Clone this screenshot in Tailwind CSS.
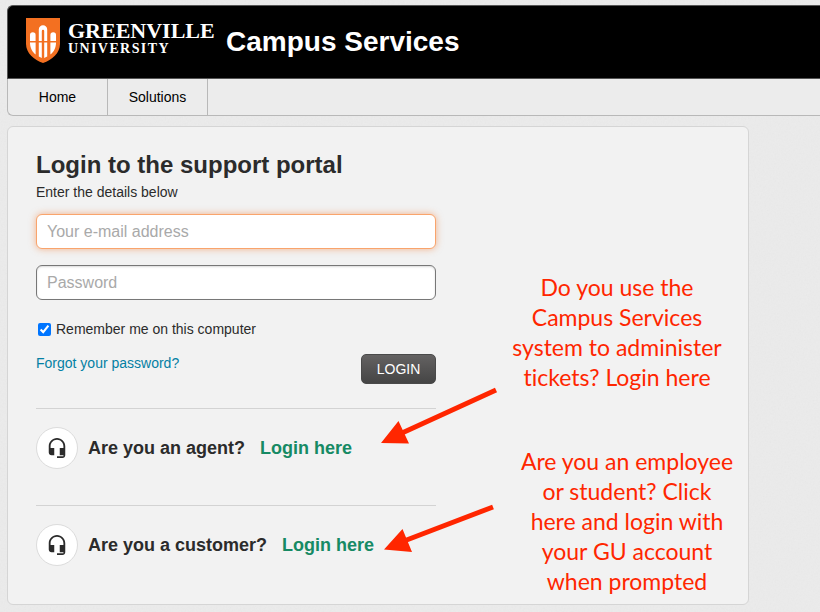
<!DOCTYPE html>
<html lang="en">
<head>
    <meta charset="UTF-8">
    <meta name="viewport" content="width=device-width, initial-scale=1.0">
    <title>Campus Services</title>
    <script src="https://cdn.jsdelivr.net/npm/@tailwindcss/browser@4"></script>
</head>
<body class="relative min-h-screen bg-[#ebebeb] pl-[7px] pt-[5px] pb-2 font-['Liberation_Sans',Arial,sans-serif] text-sm text-[#2b2b2b]">
    <!-- Paper texture -->
    <svg class="absolute inset-0 -z-10 h-full w-full opacity-5" aria-hidden="true">
        <filter id="paper">
            <feTurbulence type="fractalNoise" baseFrequency="0.6" numOctaves="2"/>
            <feColorMatrix type="saturate" values="0"/>
        </filter>
        <rect width="100%" height="100%" filter="url(#paper)"/>
    </svg>

    <!-- Header -->
    <header>
        <div class="flex h-[74px] items-center rounded-tl-md border-t border-l border-b border-[#555] bg-black pl-[18px] text-white">
            <svg class="mb-[3px] h-[45px] w-[34px]" viewBox="0 0 34 45" aria-hidden="true">
                <path fill="#f37021" d="M0 0H34V26C34 35 26 42 17 45C8 42 0 35 0 26Z"/>
                <g fill="#fff">
                    <path d="M4 23V17a2.8 2.8 0 0 1 5.6 0v6Z"/>
                    <path d="M24.4 23V17a2.8 2.8 0 0 1 5.6 0v6Z"/>
                    <path d="M12.8 23V11.5a4.2 4.2 0 0 1 8.4 0V23H18.2V13a1.2 1.2 0 0 0-2.4 0V23Z"/>
                    <path d="M4 24.4H9.6V36.5C6.2 33.5 4 30 4 24.4Z"/>
                    <path d="M30 24.4H24.4V36.5C27.8 33.5 30 30 30 24.4Z"/>
                    <path d="M12.8 24.4H15.8V40L12.8 38.5Z"/>
                    <path d="M21.2 24.4H18.2V40L21.2 38.5Z"/>
                </g>
            </svg>
            <div class="ml-2 w-[148px] pb-2 font-['Liberation_Serif',serif] font-bold">
                <div class="text-[22px] leading-[22px]">GREENVILLE</div>
                <div class="text-sm leading-[14px] tracking-widest">UNIVERSITY</div>
            </div>
            <h1 class="ml-[10px] text-[28px] leading-8 font-bold">Campus Services</h1>
        </div>
        <nav class="flex h-[37px] rounded-bl-md border-b border-l border-[#b8b8b8] bg-[#ececec] text-black">
            <a href="#" class="flex w-[100px] items-center justify-center border-r border-[#b8b8b8]">Home</a>
            <a href="#" class="flex w-[100px] items-center justify-center border-r border-[#b8b8b8]">Solutions</a>
        </nav>
    </header>

    <!-- Login card -->
    <main class="relative mt-[10px] max-w-[742px] rounded-md border border-[#d5d5d5] bg-[#f2f2f2] px-7 pt-[22px] pb-[38px]">
        <div class="w-[400px]">
            <h2 class="text-2xl font-bold">Login to the support portal</h2>
            <p class="mt-px leading-5">Enter the details below</p>

            <form class="mt-3">
                <input type="email" aria-label="Your e-mail address" placeholder="Your e-mail address" class="block h-[35px] w-full rounded-md border border-[#f9a46c] bg-white px-[10px] text-base shadow-[0_0_7px_rgba(243,112,33,0.5)] outline-none placeholder:text-[#a9a9a9]">
                <input type="password" aria-label="Password" placeholder="Password" class="mt-4 block h-[35px] w-full rounded-md border border-[#777] bg-white px-[10px] text-base shadow-[inset_0_1px_2px_rgba(0,0,0,0.15)] outline-none placeholder:text-[#a9a9a9]">
                <label class="mt-[19px] flex items-center gap-[5px] pl-[2px] leading-5">
                    <input type="checkbox" checked class="h-[13px] w-[13px] accent-[#0075ff]">
                    Remember me on this computer
                </label>
                <div class="mt-[15px] flex items-start justify-between">
                    <a href="#" class="leading-[18px] text-[#0480a4]">Forgot your password?</a>
                    <button type="submit" class="h-[30px] w-[75px] rounded-[5px] border border-[#4a4a4a] bg-linear-to-b from-[#646262] to-[#454545] text-white">LOGIN</button>
                </div>
            </form>

            <div class="mt-6 flex items-center border-t border-[#d3d3d3] pt-[18px] text-lg font-bold">
                <span class="flex h-[42px] w-[42px] items-center justify-center rounded-full border border-[#dcdcdc] bg-white">
                    <svg class="h-[22px] w-[22px]" viewBox="0 0 24 24" fill="#2b2b2b" aria-hidden="true">
                        <path d="M12 1c-4.97 0-9 4.03-9 9v7c0 1.66 1.34 3 3 3h3v-8H5v-2c0-3.87 3.13-7 7-7s7 3.13 7 7v2h-4v8h4v1h-7v2h6c1.66 0 3-1.34 3-3V10c0-4.97-4.03-9-9-9z"/>
                    </svg>
                </span>
                <span class="ml-[10px]">Are you an agent?</span>
                <a href="#" class="ml-[15px] text-[#168a64]">Login here</a>
            </div>

            <div class="mt-9 flex items-center border-t border-[#d3d3d3] pt-[18px] text-lg font-bold">
                <span class="flex h-[42px] w-[42px] items-center justify-center rounded-full border border-[#dcdcdc] bg-white">
                    <svg class="h-[22px] w-[22px]" viewBox="0 0 24 24" fill="#2b2b2b" aria-hidden="true">
                        <path d="M12 1c-4.97 0-9 4.03-9 9v7c0 1.66 1.34 3 3 3h3v-8H5v-2c0-3.87 3.13-7 7-7s7 3.13 7 7v2h-4v8h4v1h-7v2h6c1.66 0 3-1.34 3-3V10c0-4.97-4.03-9-9-9z"/>
                    </svg>
                </span>
                <span class="ml-[10px]">Are you a customer?</span>
                <a href="#" class="ml-[15px] text-[#168a64]">Login here</a>
            </div>
        </div>

        <!-- Notes over the card -->
        <p class="absolute top-[145px] left-[479px] w-[260px] text-center font-[Lato,sans-serif] text-[23px] leading-[30px] text-[#ff2600] [font-variant-ligatures:none]">
            Do you use the<br>Campus Services<br>system to administer<br>tickets? Login here
        </p>
        <p class="absolute top-[319px] left-[489px] w-[260px] text-center font-[Lato,sans-serif] text-[23px] leading-[30px] text-[#ff2600] [font-variant-ligatures:none]">
            Are you an employee<br>or student? Click<br>here and login with<br>your GU account<br>when prompted
        </p>
        <svg class="pointer-events-none absolute top-[259px] left-[372px] h-[170px] w-[120px]" viewBox="380 386 120 170" fill="#ff2600" stroke="#ff2600" aria-hidden="true">
            <path stroke-width="5" d="M496 390L402 433M493 507L404 541"/>
            <path stroke="none" d="M381 443L398.5 421L409 443.5ZM384 549.5L402.5 529L412 552Z"/>
        </svg>
    </main>
</body>
</html>
